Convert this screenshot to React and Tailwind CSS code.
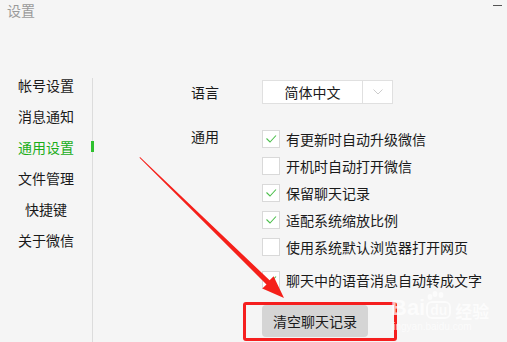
import React from "react";

const navItems = ["帐号设置", "消息通知", "通用设置", "文件管理", "快捷键", "关于微信"];

const options = [
  { label: "有更新时自动升级微信", checked: true },
  { label: "开机时自动打开微信", checked: false },
  { label: "保留聊天记录", checked: true },
  { label: "适配系统缩放比例", checked: true },
  { label: "使用系统默认浏览器打开网页", checked: false },
];

const Checkbox = ({ checked }) => (
  <div className="w-[18px] h-[18px] bg-white border border-[#d9d9d9] shrink-0 flex items-center justify-center">
    {checked && (
      <svg width="16" height="16" viewBox="0 0 16 16">
        <polyline points="3.5,7.5 7,11 13,4.5" fill="none" stroke="#4cbf4c" strokeWidth="1.1" />
      </svg>
    )}
  </div>
);

const Row = ({ label, checked, className = "" }) => (
  <div className={"h-[27px] flex items-center " + className}>
    <Checkbox checked={checked} />
    <span className="ml-[6px] text-[14px] leading-[14px] text-[#1a1a1a]">{label}</span>
  </div>
);

export default function App() {
  return (
    <div
      className="relative w-[507px] h-[342px] bg-[#f5f5f5] overflow-hidden flex flex-col"
      style={{ fontFamily: '"Noto Sans CJK SC", "Noto Sans", sans-serif' }}
    >
      {/* title bar */}
      <div className="h-0 relative">
        <div className="absolute left-[7px] top-[3px] text-[14px] leading-[14px] text-[#9a9a9a]">设置</div>
        <div className="absolute left-[493px] top-[5px] w-[9px] h-[1px] bg-[#555]" />
      </div>

      <div className="flex flex-1">
        {/* nav */}
        <div className="w-[93px] mt-[78px] border-r border-[#dcdcdc] flex flex-col gap-[17px]">
          {navItems.map((item, i) => (
            <div
              key={item}
              className={
                "relative text-center text-[14px] leading-[14px] " +
                (i === 2 ? "text-[#1aad19]" : "text-[#1a1a1a]")
              }
            >
              {item}
              {i === 2 && <div className="absolute right-[-2px] top-[1px] w-[3px] h-[11px] bg-[#2ec12e]" />}
            </div>
          ))}
        </div>

        {/* content */}
        <div className="pl-[98px] pt-[80px] flex flex-col">
          <div className="flex items-center">
            <div className="w-[71px] text-[14px] leading-[14px] text-[#1a1a1a]">语言</div>
            <div className="w-[131px] h-[24px] bg-white border border-[#e0e0e0] flex">
              <div className="flex-1 border-r border-[#e0e0e0] flex items-center justify-center text-[14px] text-[#1a1a1a]">
                简体中文
              </div>
              <div className="w-[29px] flex items-center justify-center">
                <svg width="10" height="6" viewBox="0 0 10 6">
                  <polyline points="0.5,0.5 5,5 9.5,0.5" fill="none" stroke="#cccccc" strokeWidth="1" />
                </svg>
              </div>
            </div>
          </div>

          <div className="flex mt-[21px]">
            <div className="w-[71px] text-[14px] leading-[22px] text-[#1a1a1a]">通用</div>
            <div className="flex flex-col">
              {options.map((o) => (
                <Row key={o.label} label={o.label} checked={o.checked} />
              ))}
              <Row label="聊天中的语音消息自动转成文字" checked={true} className="mt-[6px]" />
              <button className="mt-[12px] w-[106px] h-[32px] rounded-[4px] bg-[#d5d5d5] text-[14px] text-[#1a1a1a]">
                清空聊天记录
              </button>
            </div>
          </div>
        </div>
      </div>

      {/* annotation: red arrow */}
      <svg className="absolute left-0 top-0 pointer-events-none" width="507" height="342">
        <polygon
          points="140,157 269.6,280.2 273.6,276.2 284,298 262.3,288.6 266.5,284.4 139.5,157.8"
          fill="#f5201a"
        />
      </svg>

      {/* annotation: red box */}
      <div className="absolute left-[243px] top-[302px] w-[154px] h-[39px] border-[3px] border-[#f51f1f] rounded-[3px]" />

      {/* watermark */}
      <div className="absolute left-[391px] top-[291px] text-white opacity-70 pointer-events-none">
        <svg className="absolute left-[34px] top-[0px]" width="22" height="12" viewBox="0 0 22 12">
          <ellipse cx="5" cy="6" rx="2.5" ry="3" fill="#ffffff" />
          <ellipse cx="10" cy="3" rx="2.5" ry="3" fill="#ffffff" />
          <ellipse cx="16" cy="4" rx="2.5" ry="3" fill="#ffffff" />
        </svg>
        <div className="mt-[6px] flex items-end leading-none">
          <span className="text-[22px] font-bold" style={{ fontFamily: '"Liberation Sans", sans-serif' }}>Bai</span>
          <span className="ml-[1px] px-[2px] text-[14px] font-bold border-2 border-white rounded-[6px] leading-[14px]" style={{ fontFamily: '"Liberation Sans", sans-serif' }}>du</span>
          <span className="ml-[4px] text-[17px] font-bold">经验</span>
        </div>
        <div className="mt-[3px] text-[10px] leading-[10px]" style={{ fontFamily: '"Liberation Sans", sans-serif' }}>jingyan.baidu.com</div>
      </div>
    </div>
  );
}
